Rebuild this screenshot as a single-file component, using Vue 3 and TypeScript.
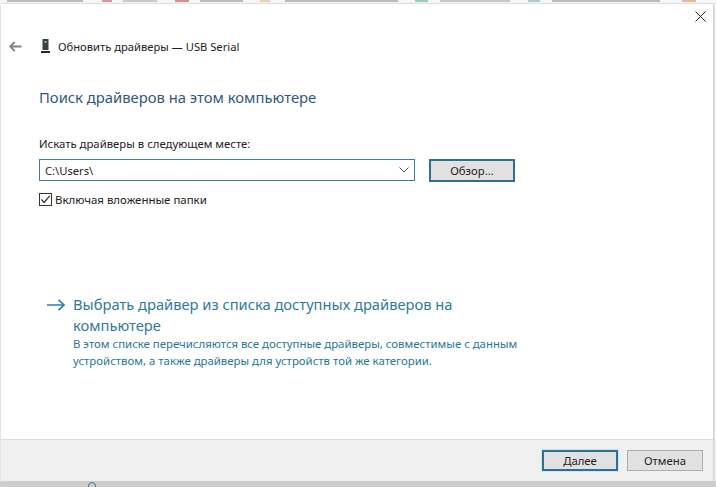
<script setup lang="ts">
const segments: { w: number; c: string; gap: number }[] = [
  { w: 76, c: '#8a8a8a', gap: 19 },
  { w: 10, c: '#b8504f', gap: 11 },
  { w: 34, c: '#a8a8a8', gap: 18 },
  { w: 14, c: '#c0353f', gap: 11 },
  { w: 43, c: '#8a8a8a', gap: 17 },
  { w: 10, c: '#d8b878', gap: 15 },
  { w: 113, c: '#8a8a8a', gap: 17 },
  { w: 13, c: '#4fa58a', gap: 12 },
  { w: 70, c: '#a0a0a0', gap: 18 },
  { w: 12, c: '#6fa5b5', gap: 12 },
  { w: 108, c: '#8a8a8a', gap: 22 },
  { w: 14, c: '#c98a60', gap: 0 },
]
</script>

<template>
  <div class="screen">
    <div class="strip">
      <span
        v-for="(s, i) in segments"
        :key="i"
        class="seg"
        :style="{ width: s.w + 'px', background: s.c, marginRight: s.gap + 'px' }"
      ></span>
    </div>

    <div class="window">
      <div class="content">
        <div class="close-row">
          <svg class="close" width="11" height="11" viewBox="0 0 11 11">
            <path d="M0.5 0.5L10.5 10.5M10.5 0.5L0.5 10.5" stroke="#222" stroke-width="1" fill="none" />
          </svg>
        </div>

        <div class="nav">
          <svg class="back" width="13" height="11" viewBox="0 0 13 11">
            <path d="M12.5 5.5H1.2M5.8 0.8L1.2 5.5L5.8 10.2" stroke="#808080" stroke-width="1.8" fill="none" />
          </svg>
          <svg class="device" width="9" height="14" viewBox="0 0 9 14">
            <rect x="1.5" y="0" width="6" height="11" fill="#39423c" />
            <rect x="3.5" y="2" width="2" height="2" fill="#9fb3a6" />
            <rect x="0" y="12" width="9" height="2" fill="#2b2b2b" />
          </svg>
          <span class="nav-title">Обновить драйверы — USB Serial</span>
        </div>

        <div class="body">
          <h1 class="heading">Поиск драйверов на этом компьютере</h1>

          <div class="label">Искать драйверы в следующем месте:</div>
          <div class="path-row">
            <div class="combo">
              <span class="combo-text">C:\Users\</span>
              <svg width="10" height="6" viewBox="0 0 10 6">
                <path d="M0.5 0.5L5 5L9.5 0.5" stroke="#555" stroke-width="1" fill="none" />
              </svg>
            </div>
            <div class="btn browse">Обзор...</div>
          </div>

          <div class="check-row">
            <span class="check">
              <svg width="11" height="11" viewBox="0 0 11 11">
                <path d="M1.5 5.5L4.2 8.5L9.6 1.8" stroke="#333" stroke-width="1.2" fill="none" />
              </svg>
            </span>
            <span class="check-label">Включая вложенные папки</span>
          </div>

          <div class="link">
            <svg class="link-arrow" width="18" height="12" viewBox="0 0 18 12">
              <path d="M0 6H17M11.5 0.8L17 6L11.5 11.2" stroke="#2f7fa8" stroke-width="1.7" fill="none" />
            </svg>
            <div class="link-text">
              <div class="link-title">Выбрать драйвер из списка доступных драйверов на компьютере</div>
              <div class="link-desc">В этом списке перечисляются все доступные драйверы, совместимые с данным устройством, а также драйверы для устройств той же категории.</div>
            </div>
          </div>
        </div>
      </div>

      <div class="footer">
        <div class="btn primary">Далее</div>
        <div class="btn">Отмена</div>
      </div>
    </div>

    <div class="under">
      <span class="under-mark"></span>
    </div>
  </div>
</template>

<style>
html, body { margin: 0; background: #fff; }
</style>

<style scoped>
.screen {
  width: 716px;
  height: 487px;
  display: flex;
  flex-direction: column;
  overflow: hidden;
  background: #fff;
  font-family: "Noto Sans", "Open Sans", sans-serif;
  color: #222;
}
.strip {
  height: 3px;
  flex: none;
  display: flex;
  padding-left: 7px;
  background: #f7f7f7;
  border-bottom: 1px solid #eeeeee;
}
.seg { height: 2px; flex: none; opacity: .55; }
.window {
  flex: 1;
  min-height: 0;
  display: flex;
  flex-direction: column;
  margin: 0 2px 0 1px;
  background: #fff;
  box-shadow: 0 1px 3px rgba(0,0,0,.3);
  border-right: 1px solid #d2d2d2;
}
.content { flex: 1; min-height: 0; display: flex; flex-direction: column; }
.close-row {
  height: 28px;
  display: flex;
  justify-content: flex-end;
  align-items: flex-start;
  padding: 7px 7px 0 0;
  box-sizing: border-box;
  flex: none;
}
.nav {
  height: 28px;
  display: flex;
  align-items: center;
  padding-left: 8px;
  flex: none;
}
.back { margin-right: 19px; }
.device { margin-right: 9px; }
.nav-title { margin-left: -1px; font-size: 11.2px; color: #222; white-space: nowrap; }
.body { padding: 0 0 0 38px; }
.heading {
  margin: 26px 0 0;
  font-size: 14.8px;
  line-height: 22px;
  font-weight: 400;
  color: #30597f;
  white-space: nowrap;
}
.label { margin-top: 28px; font-size: 11.35px; line-height: 16px; color: #222; white-space: nowrap; }
.path-row { margin-top: 7px; display: flex; align-items: flex-start; }
.combo {
  width: 376px;
  height: 22px;
  box-sizing: border-box;
  border: 1px solid #3f7f8f;
  display: flex;
  align-items: center;
  justify-content: space-between;
  padding: 0 5px 0 5px;
}
.combo-text { font-size: 11.2px; color: #222; }
.btn {
  width: 76px;
  height: 21px;
  box-sizing: border-box;
  display: flex;
  align-items: center;
  justify-content: center;
  background: #e1e1e1;
  border: 1px solid #adadad;
  font-size: 11.3px;
  color: #222;
}
.browse {
  width: 86px;
  height: 23px;
  margin-left: 14px;
  border: 2px solid #2f6f8f;
}
.check-row { margin-top: 10px; display: flex; align-items: center; height: 14px; }
.check {
  width: 13px;
  height: 13px;
  box-sizing: border-box;
  border: 1px solid #333;
  display: flex;
  align-items: center;
  justify-content: center;
  flex: none;
}
.check-label { margin-left: 3px; margin-top: 1px; font-size: 11.45px; color: #222; white-space: nowrap; }
.link { margin-top: 88px; display: flex; align-items: flex-start; padding-left: 8px; }
.link-arrow { flex: none; margin-top: 5px; margin-right: 8px; }
.link-title { width: 420px; font-size: 14.7px; line-height: 21px; color: #2f7a9a; }
.link-desc { width: 460px; margin-top: -1px; font-size: 11.4px; line-height: 17px; color: #2a7596; }
.footer {
  height: 42px;
  flex: none;
  box-sizing: border-box;
  border-top: 1px solid #dcdcdc;
  background: #f0f0f0;
  display: flex;
  justify-content: flex-end;
  align-items: flex-start;
  gap: 9px;
  padding: 10px 10px 0 0;
}
.primary { border: 2px solid #2f6f8f; box-shadow: 0 0 0 1px #cfe8f5; }
.under {
  height: 6px;
  flex: none;
  background: #cdcdcd;
  position: relative;
}
.under-mark {
  position: absolute;
  left: 88px;
  top: 1px;
  width: 8px;
  height: 8px;
  box-sizing: border-box;
  border: 1px solid #5a6a7a;
  border-radius: 50%;
}
</style>
